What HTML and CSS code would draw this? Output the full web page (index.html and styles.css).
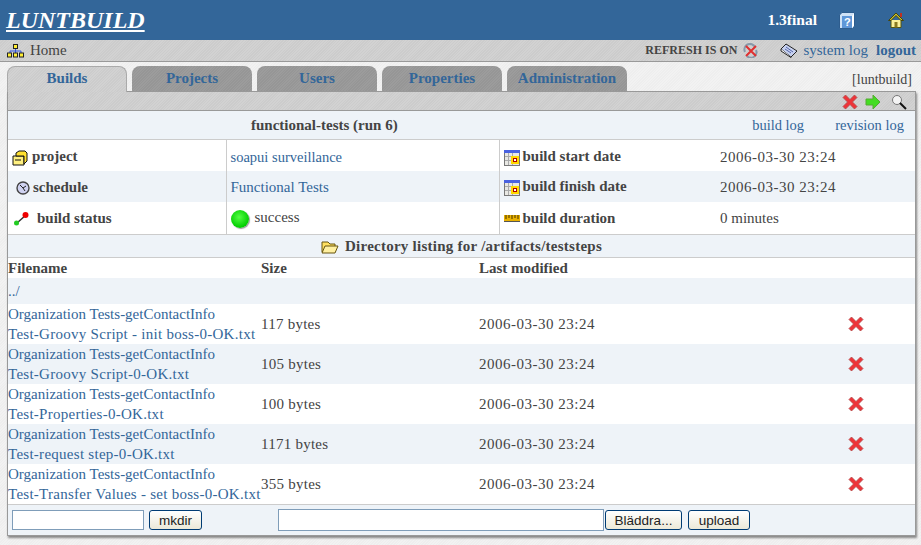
FILE: index.html
```html
<!DOCTYPE html>
<html lang="en">
<head>
<meta charset="UTF-8">
<meta name="viewport" content="width=device-width, initial-scale=1.0">
<title>Luntbuild</title>
<link rel="stylesheet" href="styles.css">
</head>
<body>
<svg class="defs" width="0" height="0">
    <symbol id="i-x" viewBox="0 0 16 16">
        <path d="M1 3.5 3.5 1 8 5.500 12.500 1 15 3.500 10.500 8 15 12.500 12.500 15 8 10.500 3.500 15 1 12.500 5.500 8Z" fill="#ee3338" stroke="#b04a4a" stroke-width=".8"/>
    </symbol>
    <symbol id="i-cal" viewBox="0 0 16 16">
        <rect x=".5" y=".5" width="15" height="15" fill="#e8e8e4" stroke="#777"/>
        <rect x="0" y="0" width="16" height="3" fill="#4a62e0"/>
        <path d="M1 6.500h14M1 10.500h14M4.500 3v12M8.500 3v12" stroke="#aaa"/>
        <rect x="7" y="6" width="8" height="8" fill="#ffd800"/>
        <rect x="9.500" y="8.500" width="3" height="3" fill="#fff" stroke="#b00000"/>
    </symbol>
</svg>

<div class="top">
    <a href="#" class="logo">LUNTBUILD</a>
    <span class="version">1.3final</span>
    <svg class="help" width="16" height="17" viewBox="0 0 16 17">
        <path d="M.5 3 3 .5H15.500V14L13.500 16.500H.5Z" fill="#cfe2f6" stroke="#2e5d8e"/>
        <rect x="3" y="4" width="10" height="12" fill="#5f97d8"/>
        <path d="M13 4 15 1.500V13.500L13 16Z" fill="#fff"/>
        <text x="5" y="14" font-size="11" font-weight="bold" fill="#fff" font-family="Liberation Sans">?</text>
    </svg>
    <svg class="home" width="16" height="16" viewBox="0 0 16 16">
        <path d="M3 8V15.500H13V8" fill="#fbf09a" stroke="#55550f"/>
        <path d="M.5 8.500 8 1 15.500 8.500 13 8.500 8 3.500 3 8.500Z" fill="#c8c030" stroke="#45450a"/>
        <rect x="6.500" y="10" width="3" height="5.500" fill="#8a7a20"/>
        <rect x="12" y="1" width="2" height="4" fill="#c03020"/>
    </svg>
</div>

<div class="crumbs">
    <svg width="17" height="14" viewBox="0 0 17 14">
        <path d="M8.500 4V7M3 9V7H14V9M8.500 7V9" stroke="#3355dd" fill="none"/>
        <rect x="6.500" y=".5" width="4" height="4" fill="#ffee33" stroke="#222"/>
        <rect x=".5" y="9" width="4" height="4" fill="#ffee33" stroke="#222"/>
        <rect x="6.500" y="9" width="4" height="4" fill="#ffee33" stroke="#222"/>
        <rect x="12.500" y="9" width="4" height="4" fill="#ffee33" stroke="#222"/>
    </svg>
    <span class="home-link">Home</span>
    <span class="spacer"></span>
    <b class="refresh">REFRESH IS ON</b>
    <svg class="no-refresh" width="15" height="15" viewBox="0 0 15 15">
        <path d="M2 9A5.500 5.500 0 0 1 12 4M13 7A5.500 5.500 0 0 1 4 13" fill="none" stroke="#8899aa" stroke-width="2"/>
        <path d="M3 3 13 13M13 3 3 13" stroke="#e03030" stroke-width="2"/>
    </svg>
    <svg class="log-icon" width="18" height="15" viewBox="0 0 18 15">
        <path d="M1 6 6 1 17 8 11 14Z" fill="#c8d2f0" stroke="#222"/>
        <path d="M1 6V8L11 14.500V14" fill="#fff" stroke="#222"/>
        <path d="M6 4 13 9M5 6 11 10" stroke="#5566aa"/>
    </svg>
    <a href="#" class="sys-log">system log</a>
    <a href="#" class="logout">logout</a>
</div>

<div class="tabs">
    <a href="#" class="tab active">Builds</a>
    <a href="#" class="tab">Projects</a>
    <a href="#" class="tab">Users</a>
    <a href="#" class="tab">Properties</a>
    <a href="#" class="tab">Administration</a>
    <span class="user">[luntbuild]</span>
</div>

<div class="panel">
    <div class="tools">
        <svg width="16" height="16"><use href="#i-x"/></svg>
        <svg class="t-next" width="16" height="16" viewBox="0 0 16 16">
            <path d="M1 5H8V1L15 8 8 15V11H1Z" fill="#44dd22" stroke="#55aa33"/>
        </svg>
        <svg class="t-find" width="16" height="16" viewBox="0 0 16 16">
            <circle cx="6" cy="6" r="4.500" fill="#f4f4f4" stroke="#777"/>
            <path d="M9 9 15 15" stroke="#111" stroke-width="2"/>
        </svg>
    </div>

    <div class="title-row">
        <b class="run-title">functional-tests (run 6)</b>
        <a href="#" class="log-link">build log</a>
        <a href="#" class="log-link rev">revision log</a>
    </div>

    <table class="info">
        <colgroup>
            <col class="c1"><col class="c2"><col class="c3"><col class="c4">
        </colgroup>
        <tr>
            <th>
                <svg class="ico-project" width="16" height="16" viewBox="0 0 16 16">
                    <path d="M1 6H12V15H1Z" fill="#fff080" stroke="#111"/>
                    <path d="M4 6V3L7 1H13L15 3V11L12 14V6Z" fill="#ffe030" stroke="#111"/>
                    <path d="M3 10H9" stroke="#111"/>
                </svg>project
            </th>
            <td><a href="#" class="cell-link">soapui surveillance</a></td>
            <th><svg class="ico-cal" width="16" height="16"><use href="#i-cal"/></svg>build start date</th>
            <td class="date">2006-03-30 23:24</td>
        </tr>
        <tr class="alt">
            <th>
                <svg class="ico-clock" width="14" height="14" viewBox="0 0 14 14">
                    <circle cx="7" cy="7" r="6" fill="#cfd2f0" stroke="#444" stroke-width="1.400"/>
                    <path d="M4 4 7 7 10 5M7 7 9 10" stroke="#222" fill="none"/>
                </svg>schedule
            </th>
            <td><a href="#">Functional Tests</a></td>
            <th><svg class="ico-cal" width="16" height="16"><use href="#i-cal"/></svg>build finish date</th>
            <td class="date">2006-03-30 23:24</td>
        </tr>
        <tr>
            <th>
                <svg class="ico-status" width="17" height="16" viewBox="0 0 17 16">
                    <path d="M4 12 13 4" stroke="#333" stroke-width="1.500"/>
                    <circle cx="12.500" cy="4" r="3" fill="#ee0000"/>
                    <circle cx="3.500" cy="12" r="2.500" fill="#22cc22"/>
                </svg>build status
            </th>
            <td>
                <span class="ball"></span>success
            </td>
            <th>
                <svg class="ico-cal" width="16" height="16" viewBox="0 0 16 16">
                    <rect y="4" width="16" height="7" fill="#e8b000"/>
                    <path d="M2 4V8M5 4V7M8 4V8M11 4V7M14 4V8" stroke="#443300"/>
                    <path d="M0 10.500H16" stroke="#555"/>
                </svg>build duration
            </th>
            <td>0 minutes</td>
        </tr>
    </table>

    <div class="dir-head">
        <svg width="18" height="15" viewBox="0 0 18 15">
            <path d="M1 13V3H7L9 5H14V13Z" fill="#ffe060" stroke="#665511"/>
            <path d="M1 14 4 7H17L14 14Z" fill="#fff0a0" stroke="#665511"/>
        </svg>
        <b>Directory listing for /artifacts/teststeps</b>
    </div>

    <table class="files">
        <colgroup>
            <col class="f1"><col class="f2"><col class="f3"><col class="f4">
        </colgroup>
        <tr class="head">
            <th>Filename</th><th>Size</th><th>Last modified</th><th></th>
        </tr>
        <tr class="alt up">
            <td><a href="#">../</a></td><td></td><td></td><td></td>
        </tr>
        <tr>
            <td><a href="#">Organization Tests-getContactInfo<br><span class="rest">Test-Groovy Script - init boss-0-OK.txt</span></a></td>
            <td class="size">117 bytes</td><td class="date">2006-03-30 23:24</td>
            <td class="del"><svg width="16" height="16"><use href="#i-x"/></svg></td>
        </tr>
        <tr class="alt">
            <td><a href="#">Organization Tests-getContactInfo<br><span class="rest">Test-Groovy Script-0-OK.txt</span></a></td>
            <td class="size">105 bytes</td><td class="date">2006-03-30 23:24</td>
            <td class="del"><svg width="16" height="16"><use href="#i-x"/></svg></td>
        </tr>
        <tr>
            <td><a href="#">Organization Tests-getContactInfo<br><span class="rest">Test-Properties-0-OK.txt</span></a></td>
            <td class="size">100 bytes</td><td class="date">2006-03-30 23:24</td>
            <td class="del"><svg width="16" height="16"><use href="#i-x"/></svg></td>
        </tr>
        <tr class="alt">
            <td><a href="#">Organization Tests-getContactInfo<br><span class="rest">Test-request step-0-OK.txt</span></a></td>
            <td class="size">1171 bytes</td><td class="date">2006-03-30 23:24</td>
            <td class="del"><svg width="16" height="16"><use href="#i-x"/></svg></td>
        </tr>
        <tr>
            <td><a href="#">Organization Tests-getContactInfo<br><span class="rest">Test-Transfer Values - set boss-0-OK.txt</span></a></td>
            <td class="size">355 bytes</td><td class="date">2006-03-30 23:24</td>
            <td class="del"><svg width="16" height="16"><use href="#i-x"/></svg></td>
        </tr>
    </table>

    <div class="forms">
        <input type="text" class="txt small">
        <button class="btn mkdir">mkdir</button>
        <input type="text" class="txt wide">
        <button class="btn browse">Bläddra...</button>
        <button class="btn upload">upload</button>
    </div>
</div>
</body>
</html>
```

FILE: styles.css
```css
* {
    box-sizing: border-box;
}

body {
    margin: 0;
    height: 545px;
    overflow: hidden;
    background: repeating-linear-gradient(135deg, #f2f2f2 0 1px, #eeeeee 1px 2px);
    color: #444;
    font-family: "Liberation Serif", serif;
    font-size: 15px;
}

a {
    color: #336699;
    text-decoration: none;
}

.defs {
    position: absolute;
}

.top {
    display: flex;
    align-items: center;
    height: 40px;
    padding: 0 17px 0 6px;
    background-color: #336699;
    color: #fff;
}

.logo {
    color: #fff;
    font-size: 24px;
    font-style: italic;
    font-weight: bold;
    text-decoration: underline;
}

.version {
    margin-left: auto;
    font-weight: bold;
    font-size: 15.5px;
}

.help {
    margin-left: 22px;
}

.home {
    margin-left: 33px;
}

.crumbs {
    display: flex;
    align-items: center;
    height: 22px;
    padding: 0 5px 0 7px;
    background: repeating-linear-gradient(135deg, #cccccc 0 1px, #d2d2d2 1px 2px);
    border-bottom: 1px solid #999;
}

.home-link {
    margin-left: 6px;
}

.spacer {
    flex: 1;
}

.refresh {
    font-size: 12px;
}

.no-refresh {
    margin: 0 22px 0 6px;
}

.sys-log {
    margin-left: 5px;
}

.logout {
    margin-left: 8px;
    font-weight: bold;
}

.tabs {
    display: flex;
    align-items: flex-end;
    height: 29px;
    padding: 0 9px 0 7px;
}

.tab {
    position: relative;
    width: 120px;
    height: 25px;
    margin-right: 5px;
    padding-top: 4px;
    background: repeating-linear-gradient(135deg, #969696 0 1px, #9c9c9c 1px 2px);
    border-radius: 8px 8px 0 0;
    font-weight: bold;
    text-align: center;
}

.tab.active {
    height: 26px;
    margin-bottom: -1px;
    padding-top: 3px;
    background: repeating-linear-gradient(135deg, #cccccc 0 1px, #d2d2d2 1px 2px);
    border: 1px solid #aaa;
    border-bottom: none;
}

.user {
    margin-left: auto;
    padding-bottom: 3px;
    font-size: 14px;
}

.panel {
    width: 909px;
    margin-left: 7px;
    background-color: #fff;
    border: 1px solid #999;
    border-top: none;
    box-shadow: 1px 2px 2px #888;
}

.tools {
    display: flex;
    justify-content: flex-end;
    height: 20px;
    padding: 2px 8px 0 0;
    background: repeating-linear-gradient(135deg, #cccccc 0 1px, #d2d2d2 1px 2px);
    border-top: 1px solid #999;
    border-bottom: 1px solid #999;
}

.t-next {
    margin-left: 7px;
}

.t-find {
    margin-left: 10px;
}

.title-row {
    display: flex;
    align-items: center;
    height: 29px;
    padding: 1px 11px 0 0;
    background-color: #eef3f8;
    border-bottom: 1px solid #ccc;
}

.run-title {
    margin-left: 243px;
    margin-right: auto;
}

.log-link {
    font-size: 14.5px;
}

.log-link.rev {
    margin-left: 31px;
}

.info,
.files {
    width: 100%;
    border-collapse: collapse;
    table-layout: fixed;
}

.c1 { width: 218px; }
.c2 { width: 273px; }
.c3 { width: 217px; }

.info th,
.info td {
    height: 31px;
    padding: 1px 4px 0;
    border-right: 1px solid #ccc;
    text-align: left;
    vertical-align: middle;
}

.info th:last-of-type,
.info td:last-child {
    border-right: none;
}

.info tr:first-child th,
.info tr:first-child td {
    padding-top: 3px;
}

.info tr:last-child th,
.info tr:last-child td {
    height: 32px;
}

.cell-link {
    font-size: 14.5px;
}

.alt {
    background-color: #eef3f8;
}

.info svg,
.info .ball {
    vertical-align: middle;
    margin-right: 4px;
}

.info .ico-cal {
    margin-right: 3px;
}

.info .ico-clock {
    margin-left: 4px;
    margin-right: 3px;
}

.info .ico-status {
    margin-left: 1px;
    margin-right: 7px;
}

.info .ball {
    display: inline-block;
    width: 18px;
    height: 18px;
    margin-right: 6px;
    border-radius: 50%;
    background: radial-gradient(circle at 45% 40%, #55ff44, #00cc00 70%, #118811);
    box-shadow: 1px 1px 1px #999;
}

.date {
    letter-spacing: .5px;
}

.size {
    letter-spacing: .25px;
}

.dir-head {
    display: flex;
    align-items: center;
    justify-content: center;
    gap: 6px;
    height: 24px;
    background-color: #eef3f8;
    border-top: 1px solid #ccc;
    border-bottom: 1px solid #ccc;
}

.dir-head b {
    letter-spacing: .25px;
}

.f1 { width: 253px; }
.f2 { width: 218px; }
.f3 { width: 350px; }

.files th,
.files td {
    padding: 0;
    text-align: left;
    vertical-align: middle;
    line-height: 20px;
}

.files .head th {
    height: 20px;
}

.files .up td {
    height: 26px;
}

.rest {
    letter-spacing: .27px;
    white-space: nowrap;
}

.del svg {
    display: block;
    margin-left: 19px;
}

.forms {
    display: flex;
    align-items: center;
    height: 31px;
    padding-left: 4px;
    background-color: #eef3f8;
    border-top: 1px solid #ccc;
}

.txt {
    height: 20px;
    padding: 1px 3px;
    background-color: #fff;
    border: 1px solid #7f9db9;
}

.txt.small {
    width: 132px;
}

.txt.wide {
    width: 326px;
    height: 22px;
    margin-left: 76px;
}

.btn {
    height: 20px;
    padding: 0;
    background: linear-gradient(#fff, #ece9d8);
    border: 1px solid #003c74;
    border-radius: 3px;
    color: #222;
    font-family: "Liberation Sans", sans-serif;
    font-size: 13.5px;
}

.mkdir {
    width: 53px;
    margin-left: 5px;
}

.browse {
    width: 77px;
    margin-left: 1px;
}

.upload {
    width: 62px;
    margin-left: 6px;
}
```
